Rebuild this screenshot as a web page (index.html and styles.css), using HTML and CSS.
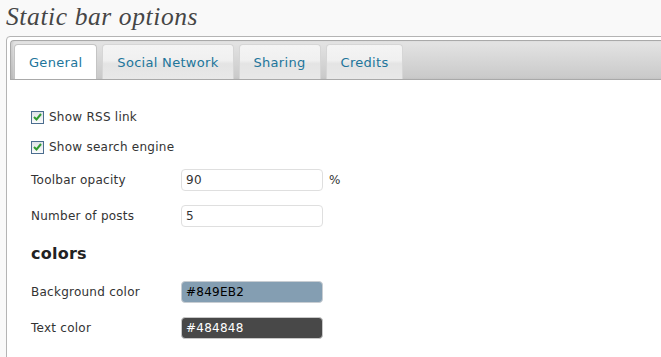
FILE: index.html
```html
<!DOCTYPE html>
<html lang="en">

<head>
  <meta charset="UTF-8">
  <title>Static bar options</title>
  <link rel="stylesheet" href="styles.css">
</head>

<body>
  <h2 class="page-title">Static bar options</h2>
  <div class="panel">
    <ul class="tabs">
      <li class="tab active">General</li>
      <li class="tab">Social Network</li>
      <li class="tab">Sharing</li>
      <li class="tab">Credits</li>
    </ul>
    <div class="tab-content">
      <label class="check-row">
        <span class="checkbox">
          <svg width="9" height="8" viewBox="0 0 9 8"><path d="M1 4 L3.5 6.5 L8 1" fill="none" stroke="#2f9b2f" stroke-width="2"/></svg>
        </span>
        Show RSS link
      </label>
      <label class="check-row">
        <span class="checkbox">
          <svg width="9" height="8" viewBox="0 0 9 8"><path d="M1 4 L3.5 6.5 L8 1" fill="none" stroke="#2f9b2f" stroke-width="2"/></svg>
        </span>
        Show search engine
      </label>
      <div class="field-row">
        <span class="field-label">Toolbar opacity</span>
        <input class="field" type="text" value="90">
        <span class="unit">%</span>
      </div>
      <div class="field-row">
        <span class="field-label">Number of posts</span>
        <input class="field" type="text" value="5">
      </div>

      <h3 class="section-title">colors</h3>

      <div class="field-row">
        <span class="field-label">Background color</span>
        <input class="field color-bg" type="text" value="#849EB2">
      </div>
      <div class="field-row">
        <span class="field-label">Text color</span>
        <input class="field color-text" type="text" value="#484848">
      </div>
    </div>
  </div>
</body>

</html>
```

FILE: styles.css
```css
body {
  margin: 0;
  background: #f9f9f9;
  font-family: "DejaVu Sans", Verdana, sans-serif;
  font-size: 12px;
  letter-spacing: 0.25px;
  color: #333;
  overflow: hidden;
}

.page-title {
  margin: 0;
  padding: 2px 0 0 6px;
  height: 34px;
  font-family: "Liberation Serif", Georgia, serif;
  font-style: italic;
  font-weight: normal;
  font-size: 25.5px;
  letter-spacing: 0.6px;
  line-height: 30px;
  color: #464646;
}

.panel {
  margin-left: 6px;
  margin-right: -20px;
  border: 1px solid #b4b4b4;
  border-radius: 4px 0 0 0;
  background: #fff;
  padding: 3px 0 0 3px;
  min-height: 330px;
}

.tabs {
  display: flex;
  gap: 5px;
  list-style: none;
  margin: 0;
  padding: 3px 0 0 3px;
  height: 35px;
  border: 1px solid #a9a9a9;
  border-right: none;
  border-radius: 4px 0 0 0;
  background: linear-gradient(#e4e4e4, #c9c9c9);
  box-shadow: inset 2px 0 2px rgba(0, 0, 0, 0.08);
}

.tab {
  display: flex;
  align-items: center;
  padding: 0 14px;
  border: 1px solid #d6d6d6;
  border-bottom: none;
  border-radius: 4px 4px 0 0;
  background: linear-gradient(#f4f4f4 0%, #f0f0f0 45%, #e4e4e4 55%, #e8e8e8 100%);
  font-size: 13px;
  letter-spacing: 0.3px;
  color: #21759b;
}

.tab.active {
  background: #fff;
  border-color: #c4c4c4;
}

.tab-content {
  padding: 22px 0 0 21px;
}

.check-row {
  display: flex;
  align-items: center;
  gap: 5px;
  height: 30px;
}

.checkbox {
  display: flex;
  align-items: center;
  justify-content: center;
  box-sizing: border-box;
  width: 13px;
  height: 13px;
  border: 1px solid #4b6d8f;
  background: linear-gradient(#dfe3e7, #fbfbfb);
}

.field-row {
  display: flex;
  align-items: center;
  height: 36px;
}

.field-label {
  width: 150px;
}

.field {
  box-sizing: border-box;
  width: 142px;
  height: 22px;
  margin: 0;
  padding: 0 4px;
  border: 1px solid #dfdfdf;
  border-radius: 4px;
  font-family: "DejaVu Sans", Verdana, sans-serif;
  font-size: 12px;
  letter-spacing: 0.25px;
  color: #333;
  background: #fff;
}

.unit {
  margin-left: 6px;
}

.section-title {
  margin: 0;
  height: 40px;
  line-height: 40px;
  font-size: 16px;
  font-weight: bold;
  color: #222;
}

.color-bg {
  background: #849eb2;
  border-color: #c8cdd2;
  color: #000;
}

.color-text {
  background: #484848;
  border-color: #c8c8c8;
  color: #fff;
}
```
